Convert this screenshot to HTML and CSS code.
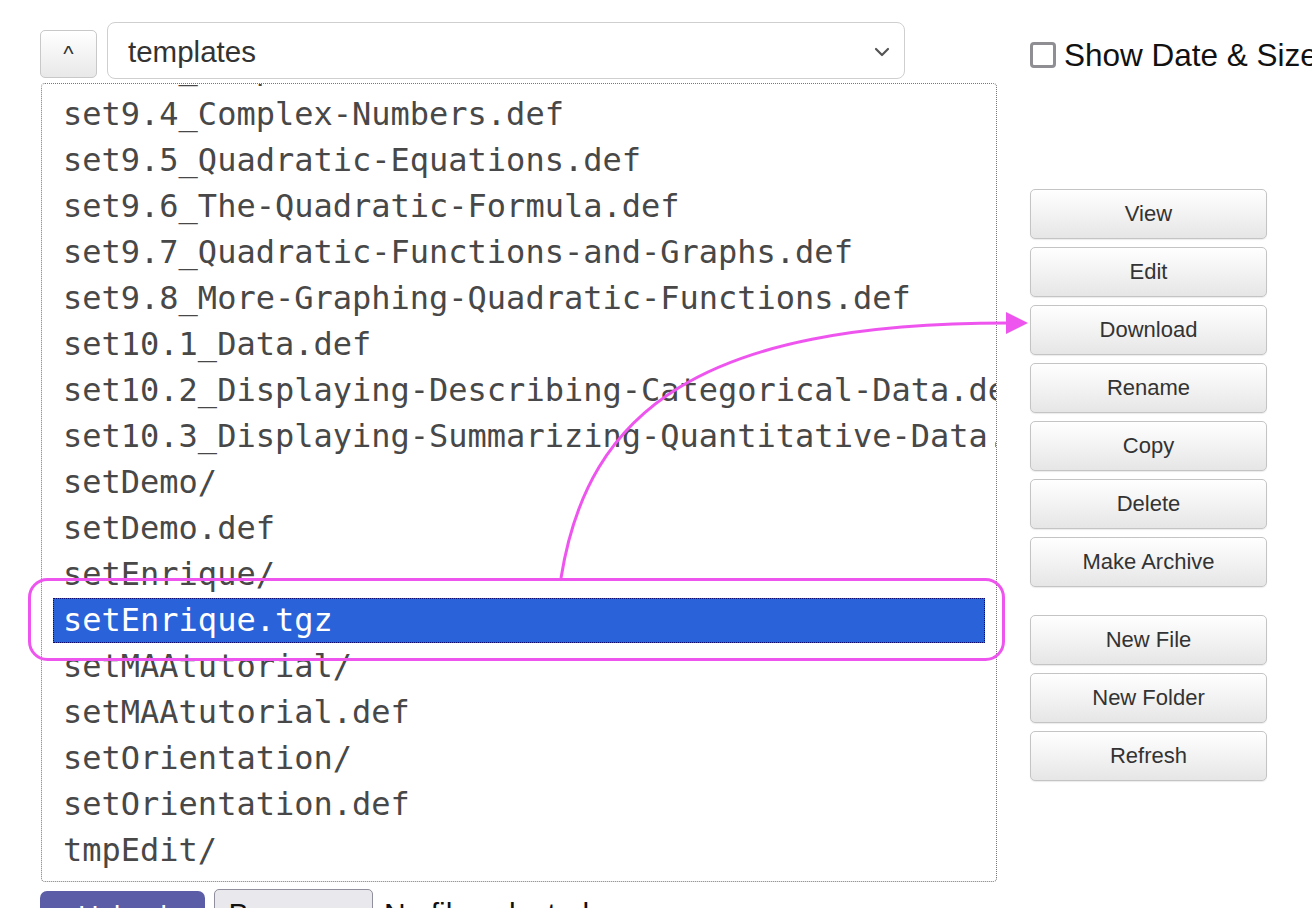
FILE: index.html
```html
<!DOCTYPE html>
<html>
<head>
<meta charset="utf-8">
<link rel="stylesheet" href="styles.css">
</head>
<body>
<div class="page">
  <div class="left">
    <div class="toprow">
      <button class="upbtn">^</button>
      <div class="dirselect">
        <span class="dirname">templates</span>
        <svg class="chev" width="16" height="10" viewBox="0 0 16 10"><path d="M2 2 L8 8 L14 2" fill="none" stroke="#555" stroke-width="2.2" stroke-linecap="round" stroke-linejoin="round"/></svg>
      </div>
    </div>
    <div class="listbox">
      <div class="list">
        <div class="item">set9.3_Computations-with-Radicals.def</div>
        <div class="item">set9.4_Complex-Numbers.def</div>
        <div class="item">set9.5_Quadratic-Equations.def</div>
        <div class="item">set9.6_The-Quadratic-Formula.def</div>
        <div class="item">set9.7_Quadratic-Functions-and-Graphs.def</div>
        <div class="item">set9.8_More-Graphing-Quadratic-Functions.def</div>
        <div class="item">set10.1_Data.def</div>
        <div class="item">set10.2_Displaying-Describing-Categorical-Data.def</div>
        <div class="item">set10.3_Displaying-Summarizing-Quantitative-Data.def</div>
        <div class="item">setDemo/</div>
        <div class="item">setDemo.def</div>
        <div class="item">setEnrique/</div>
        <div class="item selected">setEnrique.tgz</div>
        <div class="item">setMAAtutorial/</div>
        <div class="item">setMAAtutorial.def</div>
        <div class="item">setOrientation/</div>
        <div class="item">setOrientation.def</div>
        <div class="item">tmpEdit/</div>
      </div>
    </div>
    <div class="uploadrow">
      <button class="uploadbtn">Upload</button>
      <button class="browsebtn">Browse…</button>
      <span class="nofile">No file selected.</span>
    </div>
  </div>
  <div class="right">
    <label class="showdate"><span class="cbox"></span>Show Date &amp; Size</label>
    <div class="actions">
      <div class="group">
        <button class="act">View</button>
        <button class="act">Edit</button>
        <button class="act">Download</button>
        <button class="act">Rename</button>
        <button class="act">Copy</button>
        <button class="act">Delete</button>
        <button class="act">Make Archive</button>
      </div>
      <div class="group">
        <button class="act">New File</button>
        <button class="act">New Folder</button>
        <button class="act">Refresh</button>
      </div>
    </div>
  </div>
</div>
<svg class="annot" width="1312" height="908" viewBox="0 0 1312 908">
  <rect x="29.5" y="579.5" width="974" height="80" rx="18" ry="18" fill="none" stroke="#ee55ee" stroke-width="3"/>
  <path d="M561 578 C 588 410, 700 323, 1008 323" fill="none" stroke="#ee55ee" stroke-width="3"/>
  <polygon points="1006,312 1028,323 1006,334" fill="#ee55ee"/>
</svg>
</body>
</html>
```

FILE: styles.css
```css
html, body {
  margin: 0;
  padding: 0;
  width: 1312px;
  height: 908px;
  overflow: hidden;
  background: #fff;
  font-family: "Liberation Sans", Arial, sans-serif;
}

.page {
  display: flex;
  gap: 33px;
  padding: 22px 0 0 40px;
}

.left {
  width: 957px;
  display: flex;
  flex-direction: column;
  flex-shrink: 0;
}

.toprow {
  display: flex;
  align-items: flex-end;
  gap: 10px;
  height: 57px;
}

.upbtn {
  width: 57px;
  height: 48px;
  margin-bottom: 1px;
  border: 1px solid #c8c8c8;
  border-radius: 5px;
  background: linear-gradient(#ffffff, #e8e8e8);
  font-family: "Liberation Sans", Arial, sans-serif;
  font-size: 22px;
  color: #333;
  padding: 0;
}

.dirselect {
  width: 798px;
  height: 57px;
  box-sizing: border-box;
  border: 1px solid #cfcfcf;
  border-radius: 8px;
  display: flex;
  align-items: center;
  justify-content: space-between;
  padding: 3px 14px 0 20px;
  background: #fff;
}

.dirname {
  font-size: 29.5px;
  color: #333;
}

.chev {
  display: block;
}

.listbox {
  margin: 4px 0 0 1px;
  width: 956px;
  height: 799px;
  box-sizing: border-box;
  border: 1px dotted #777;
  border-radius: 4px;
  overflow: hidden;
  padding: 0 11px;
}

.list {
  margin-top: -39px;
}

.item {
  height: 46px;
  line-height: 46px;
  padding-left: 10px;
  box-sizing: border-box;
  font-family: "DejaVu Sans Mono", monospace;
  font-size: 32px;
  color: #484848;
  white-space: nowrap;
}

.item.selected {
  background: #2a62d9;
  color: #fff;
  outline: 1px dotted #0a0a70;
  outline-offset: -1px;
  margin-top: 1px;
  height: 45px;
  line-height: 45px;
}

.uploadrow {
  display: flex;
  align-items: flex-start;
  gap: 9px;
  margin-top: 7px;
}

.uploadbtn {
  width: 165px;
  height: 50px;
  margin-top: 2px;
  border: none;
  border-radius: 7px;
  background: #5b5ea6;
  color: #fff;
  font-family: "Liberation Sans", Arial, sans-serif;
  font-size: 28px;
  padding: 0;
}

.browsebtn {
  width: 159px;
  height: 50px;
  border: 1px solid #8f8f9d;
  border-radius: 5px;
  background: #e9e9ed;
  color: #111;
  font-family: "Liberation Sans", Arial, sans-serif;
  font-size: 30px;
  padding: 0;
}

.nofile {
  margin-left: 2px;
  font-size: 30px;
  line-height: 50px;
  color: #111;
}

.right {
  display: flex;
  flex-direction: column;
  width: 300px;
  flex-shrink: 0;
}

.showdate {
  display: flex;
  align-items: center;
  gap: 8px;
  margin-top: 18px;
  font-size: 31.5px;
  line-height: 30px;
  color: #111;
  white-space: nowrap;
}

.cbox {
  width: 26px;
  height: 26px;
  box-sizing: border-box;
  border: 3px solid #8e8e93;
  border-radius: 4px;
  background: #fff;
  flex-shrink: 0;
}

.actions {
  margin-top: 119px;
  display: flex;
  flex-direction: column;
  gap: 28px;
  width: 237px;
}

.group {
  display: flex;
  flex-direction: column;
  gap: 8px;
}

.act {
  width: 237px;
  height: 50px;
  border: 1px solid #c4c4c4;
  border-radius: 5px;
  background: linear-gradient(#ffffff, #e6e6e6);
  font-family: "Liberation Sans", Arial, sans-serif;
  font-size: 22px;
  color: #333;
  padding: 0;
  box-shadow: 0 1px 1px rgba(0,0,0,0.08);
}

.annot {
  position: absolute;
  left: 0;
  top: 0;
  pointer-events: none;
}
```
